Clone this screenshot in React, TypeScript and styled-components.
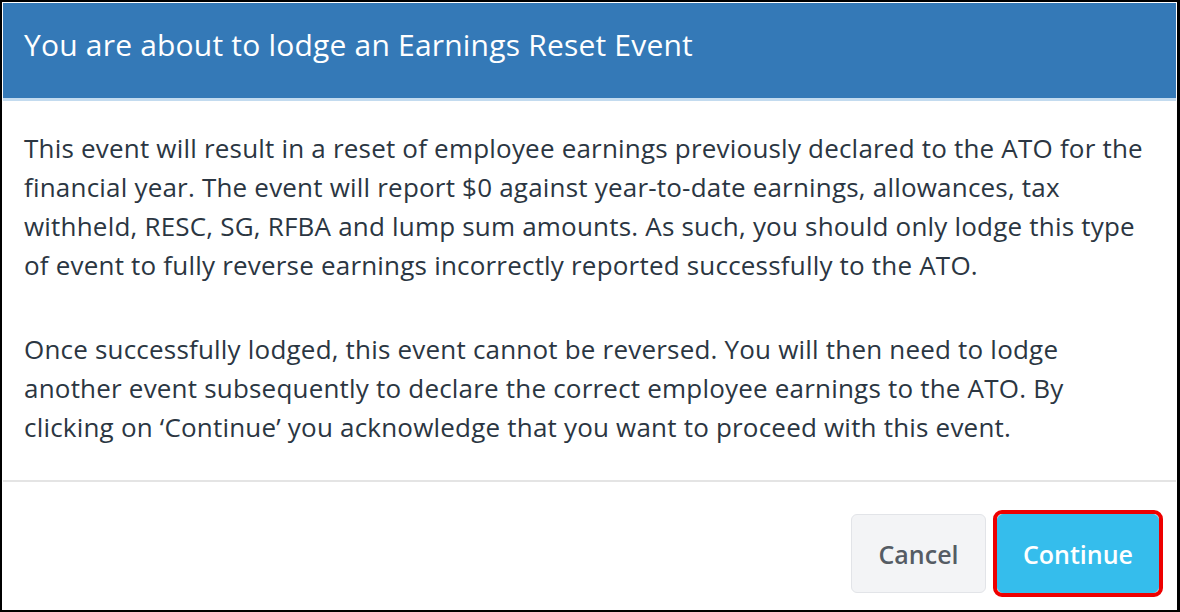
import React from "react";
import styled, { createGlobalStyle } from "styled-components";

const Global = createGlobalStyle`
  html, body { margin: 0; padding: 0; background: #000; }
  body { font-family: "Open Sans", sans-serif; }
`;

const Frame = styled.div`
  width: 1180px;
  height: 612px;
  box-sizing: border-box;
  background: #000;
  padding: 2px 3px 2px 2px;
`;

const Dialog = styled.div`
  height: 100%;
  box-sizing: border-box;
  background: #fff;
  border: 1px solid #fff;
  display: flex;
  flex-direction: column;
`;

const Header = styled.div`
  background: #3479b7;
  border-bottom: 3px solid #c3dbef;
  display: flex;
  align-items: flex-start;
  padding: 24px 21px 0;
  box-sizing: border-box;
  height: 98px;
`;

const Title = styled.h1`
  margin: 0;
  font-family: "Open Sans", sans-serif;
  font-weight: 400;
  font-size: 30px;
  line-height: 36px;
  letter-spacing: 0.2px;
  color: #fff;
`;

const Body = styled.div`
  padding: 28px 21px 33px;
  border-bottom: 2px solid #e4e4e4;
`;

const Para = styled.p`
  margin: 0;
  font-family: "Open Sans", sans-serif;
  font-size: 26px;
  line-height: 39px;
  letter-spacing: 0.2px;
  color: #2b3642;
  & + & { margin-top: 45px; }
`;

const Line = styled.span`
  display: block;
  white-space: nowrap;
`;

const Footer = styled.div`
  flex: 1;
  display: flex;
  justify-content: flex-end;
  align-items: flex-start;
  gap: 11px;
  padding: 32px 17px 0 0;
`;

const Button = styled.button<{ $primary?: boolean; $highlight?: boolean; $width: number }>`
  position: relative;
  width: ${(p) => p.$width}px;
  height: 79px;
  padding: 0;
  border-radius: 6px;
  font-family: "Open Sans", sans-serif;
  font-size: 25px;
  font-weight: 600;
  cursor: pointer;
  border: 1px solid ${(p) => (p.$primary ? "#35bdec" : "#e2e4e8")};
  background: ${(p) => (p.$primary ? "#35bdec" : "#f3f4f6")};
  color: ${(p) => (p.$primary ? "#fff" : "#555c64")};
  ${(p) =>
    p.$highlight &&
    `
    &::after {
      content: "";
      position: absolute;
      inset: -5px;
      border: 4px solid #ee0000;
      border-radius: 9px;
      pointer-events: none;
    }
  `}
`;

export default function App() {
  return (
    <>
      <Global />
      <Frame>
        <Dialog>
          <Header>
            <Title>You are about to lodge an Earnings Reset Event</Title>
          </Header>
          <Body>
            <Para>
              <Line>This event will result in a reset of employee earnings previously declared to the ATO for the</Line>
              <Line>financial year. The event will report $0 against year-to-date earnings, allowances, tax</Line>
              <Line>withheld, RESC, SG, RFBA and lump sum amounts. As such, you should only lodge this type</Line>
              <Line>of event to fully reverse earnings incorrectly reported successfully to the ATO.</Line>
            </Para>
            <Para>
              <Line>Once successfully lodged, this event cannot be reversed. You will then need to lodge</Line>
              <Line>another event subsequently to declare the correct employee earnings to the ATO. By</Line>
              <Line>clicking on ‘Continue’ you acknowledge that you want to proceed with this event.</Line>
            </Para>
          </Body>
          <Footer>
            <Button $width={135}>Cancel</Button>
            <Button $width={162} $primary $highlight>Continue</Button>
          </Footer>
        </Dialog>
      </Frame>
    </>
  );
}
